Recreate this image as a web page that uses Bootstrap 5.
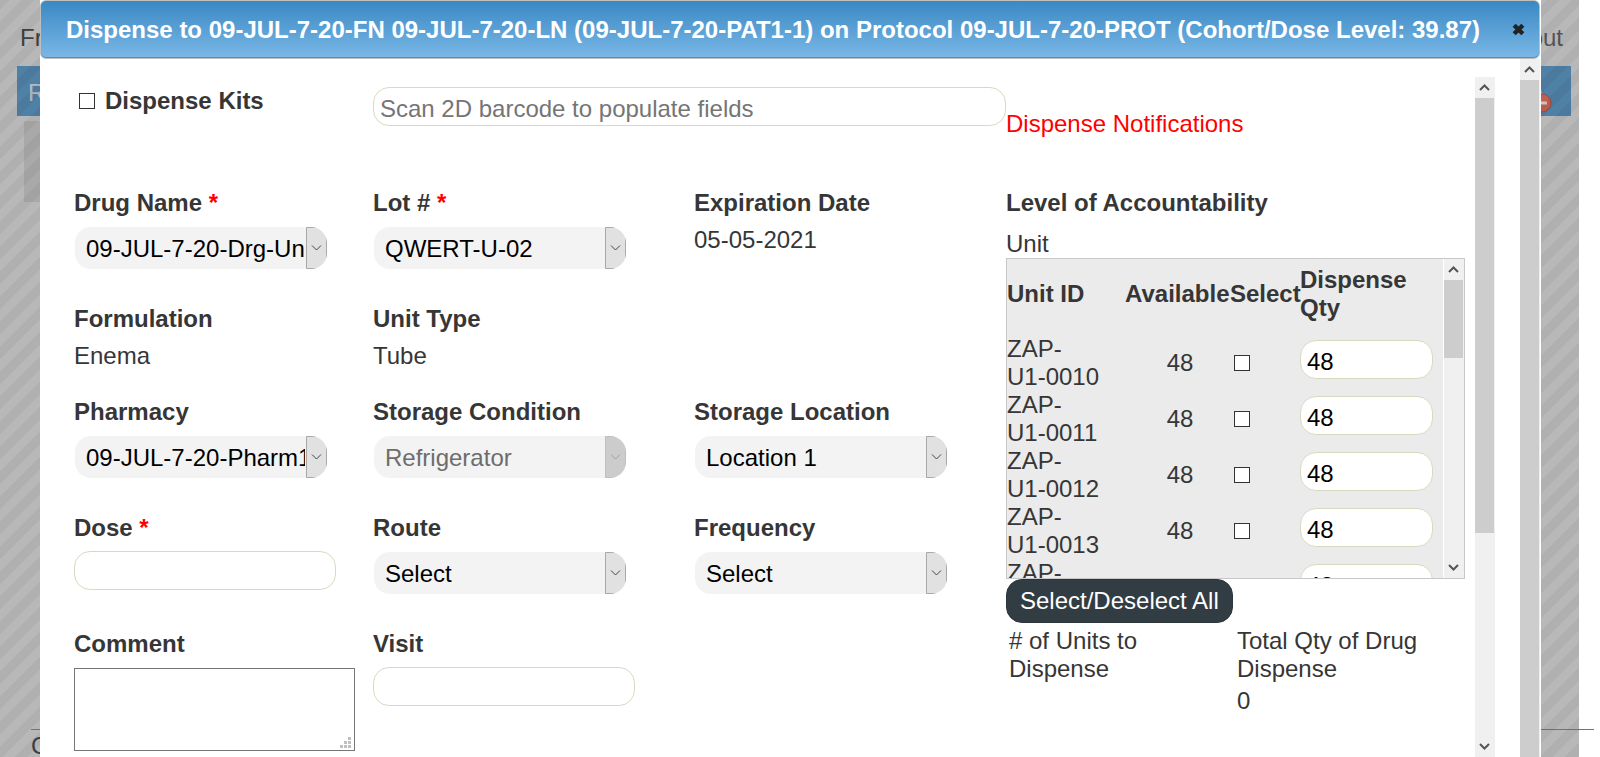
<!DOCTYPE html>
<html lang="en">
<head>
<meta charset="utf-8">
<meta name="viewport" content="width=device-width, initial-scale=1">
<title>Dispense</title>
<link href="https://cdn.jsdelivr.net/npm/bootstrap@5.3.0/dist/css/bootstrap.min.css" rel="stylesheet">
<style>
  body { font: 24px/28px "Liberation Sans", Arial, sans-serif; color: #363636; background: #fff; overflow: hidden; }
  .app-stage { height: 100vh; overflow: hidden; }

  /* page behind the dialog, dimmed by the striped overlay */
  .behind { position: absolute; inset: 0 21px 0 0; background: #b8b8b8; }
  .behind-head { height: 66px; padding: 24px 16px 0 20px; color: #404040; }
  .behind-head a { color: #555; text-decoration: none; }
  .behind-nav { height: 50px; margin: 0 8px 0 17px; padding: 13px 11px; background: #4f80a6; color: #b4bcc2; }
  .behind-nav svg { margin-right: 7px; }
  .behind-tab { width: 120px; height: 81px; margin: 5px 0 0 24px; background: #a9a9a9; }
  .behind-foot { margin: auto -15px 0 31px; border-top: 1px solid #77745f; height: 28px; padding-top: 2px; color: #404040; }
  .stripes { position: absolute; inset: 0 21px 0 0;
    background: linear-gradient(135deg, rgba(0,0,0,.045) 25%, transparent 25% 50%, rgba(0,0,0,.045) 50% 75%, transparent 75%) -3px 0 / 25px 25px; }

  .dispense-dialog { position: absolute; inset: 0 59px 0 40px; background: #fff; border-right: 1px solid #fff; }
  .dispense-title { flex: none; height: 59px; padding: 0 14px 0 25px; border: 1px solid #bfbfbf; border-radius: 6px; background: linear-gradient(#3a88c4, #7ab8e6); box-shadow: inset 0 -1px #4593d4; color: #fff; }
  .dispense-title h1 { font-size: 24px; line-height: 28px; font-weight: bold; margin: 0; white-space: nowrap; }
  .dispense-title button { border: 0; background: none; padding: 0; width: 13px; height: 28px; line-height: 0; }

  /* scroll bars */
  .bar { width: 20px; flex: none; background: #f0f0f0; border-right: 1px solid #f0f0f0; }
  .bar svg { display: block; width: 19px; height: 21px; flex: none; }
  .bar .thumb { background: #cdcdcd; }
  .thumb-form { height: 64%; }
  .thumb-units { height: 78px; }

  .dispense-pane { padding: 18px 25px 0 34px; }
  .form-side { flex: 932 1 0; min-width: 0; }
  .account-side { flex: 469 1 0; min-width: 0; }
  .fields { display: grid; grid-template-columns: 299fr 321fr 312fr; }
  .scan-row { height: 112px; }
  .scan-row .kits { padding: 10px 0 0 5px; gap: 10px; }
  .scan-row .kits .box { margin-top: 6px; }
  .scan-row .scan { grid-column: span 2; padding-top: 10px; }
  .req { color: #f00; }
  .field { padding-bottom: 28px; }
  .field label, .field .name { display: block; font-weight: bold; margin-bottom: 9px; }
  .kits label { font-weight: bold; }

  .pill-input { display: block; border: 1px solid #d8dabf; border-radius: 16px; background: #fff; color: #000; padding: 7px 6px 2px; height: 39px; width: 262px; line-height: 28px; outline: 0; }
  .pill-input::placeholder { color: #757575; opacity: 1; }
  .scan .pill-input { width: 100%; }
  .pill-select { display: block; appearance: none; width: 252px; height: 42px; margin: 10px 0 8px 1px; padding: 1px 22px 0 11px; border: 0; border-radius: 16px; color: #000; line-height: 28px; overflow: hidden;
    background: #f3f3f3 url("data:image/svg+xml,%3Csvg xmlns='http://www.w3.org/2000/svg' width='21' height='42'%3E%3Cpath d='M.5.5h20v41H.5z' fill='%23e1e1e1' stroke='%23a8a8a8'/%3E%3Cpath d='M6 18.500l4.500 4.500 4.500-4.500' fill='none' stroke='%23444'/%3E%3C/svg%3E") right top no-repeat; }
  .pill-select:disabled { color: #6d6d6d; opacity: 1;
    background-image: url("data:image/svg+xml,%3Csvg xmlns='http://www.w3.org/2000/svg' width='21' height='42'%3E%3Cpath d='M.5.5h20v41H.5z' fill='%23ccc' stroke='%23bfbfbf'/%3E%3Cpath d='M6 18.500l4.500 4.500 4.500-4.500' fill='none' stroke='%23a0a0a0'/%3E%3C/svg%3E"); }
  .box { appearance: none; flex: none; width: 16px; height: 16px; margin: 0; border: 1px solid #333; background: #fff; display: block; }
  .comment { position: relative; width: 281px; margin-top: 10px; }
  .comment textarea { display: block; width: 100%; height: 83px; border: 1px solid #767676; resize: none; outline: 0; }
  .comment svg { position: absolute; right: 4px; bottom: 3px; }

  .notice { padding-top: 33px; height: 112px; color: #f00; }
  .unit-name { padding-top: 13px; }
  .unit-list { height: 321px; margin-right: 10px; border: 1px solid #c8c8c8; background: #ebebeb; overflow: hidden; }
  .unit-list .bar { border-left: 1px solid #fff; width: 21px; }
  .unit-table { width: 100%; table-layout: fixed; border-collapse: collapse; }
  .unit-table col:nth-child(1) { width: 118px; }
  .unit-table col:nth-child(2) { width: 105px; }
  .unit-table col:nth-child(3) { width: 70px; }
  .unit-table th { padding: 7px 0 13px; vertical-align: middle; }
  .unit-table td { padding: 0; height: 56px; vertical-align: middle; }
  .unit-table .pill-input { width: 133px; margin-bottom: 7px; }
  .unit-table .box { margin-left: 4px; }
  .unit-table .count { text-align: center; padding-left: 5px; }
  .toggle-all { display: block; height: 44px; padding: 0 13px; border: 1px solid #2b353a; border-radius: 16px; background: #323c43; color: #fff; }
  .totals { display: grid; grid-template-columns: 228px 1fr; margin-right: 10px; padding: 4px 0 0 3px; row-gap: 4px; }
  .totals div:nth-child(2) { padding-right: 30px; }
  .totals div:first-child { padding-right: 60px; }
</style>
</head>
<body>
<div class="app-stage position-relative">
  <div class="behind d-flex flex-column">
    <div class="behind-head d-flex justify-content-between"><span>Fr</span><a href="#">out</a></div>
    <div class="behind-nav d-flex justify-content-between"><span>R</span>
      <svg width="30" height="36" viewBox="0 0 30 36" aria-hidden="true">
        <path d="M5 -2h10l5 24H3z" fill="#7f9db4" stroke="#a5b3bd"/>
        <circle cx="19" cy="24" r="9" fill="#c2604f" stroke="#a3483b"/>
        <path d="M13 24h11" stroke="#d9c9c6" stroke-width="3"/>
      </svg>
    </div>
    <div class="behind-tab"></div>
    <div class="behind-foot">C</div>
  </div>
  <div class="stripes"></div>

  <div class="dispense-dialog d-flex flex-column" role="dialog" aria-labelledby="dlg-title">
    <div class="dispense-title d-flex align-items-center justify-content-between">
      <h1 id="dlg-title">Dispense to 09-JUL-7-20-FN 09-JUL-7-20-LN (09-JUL-7-20-PAT1-1) on Protocol 09-JUL-7-20-PROT (Cohort/Dose Level: 39.87)</h1>
      <button type="button" aria-label="Close"><svg width="13" height="13" viewBox="0 0 12 12"><path d="M2 2l8 8M10 2l-8 8" stroke="#222" stroke-width="4"/></svg></button>
    </div>

    <div class="d-flex flex-grow-1 overflow-hidden">
      <form class="dispense-pane d-flex flex-grow-1 overflow-hidden">
        <div class="form-side">
          <div class="fields scan-row">
            <div class="kits d-flex align-items-start">
              <input class="box" type="checkbox" id="kits"><label for="kits">Dispense Kits</label>
            </div>
            <div class="scan"><input class="pill-input" type="text" aria-label="Barcode" placeholder="Scan 2D barcode to populate fields"></div>
          </div>
          <div class="fields">
            <div class="field"><label for="drug">Drug Name <span class="req">*</span></label>
              <select class="pill-select" id="drug"><option>09-JUL-7-20-Drg-Un</option></select></div>
            <div class="field"><label for="lot">Lot # <span class="req">*</span></label>
              <select class="pill-select" id="lot"><option>QWERT-U-02</option></select></div>
            <div class="field"><span class="name">Expiration Date</span>05-05-2021</div>

            <div class="field"><span class="name">Formulation</span>Enema</div>
            <div class="field"><span class="name">Unit Type</span>Tube</div>
            <div class="field"></div>

            <div class="field"><label for="pharmacy">Pharmacy</label>
              <select class="pill-select" id="pharmacy"><option>09-JUL-7-20-Pharm1</option></select></div>
            <div class="field"><label for="storage">Storage Condition</label>
              <select class="pill-select" id="storage" disabled><option>Refrigerator</option></select></div>
            <div class="field"><label for="location">Storage Location</label>
              <select class="pill-select" id="location"><option>Location 1</option></select></div>

            <div class="field"><label for="dose">Dose <span class="req">*</span></label>
              <input class="pill-input" type="text" id="dose"></div>
            <div class="field"><label for="route">Route</label>
              <select class="pill-select" id="route"><option>Select</option></select></div>
            <div class="field"><label for="freq">Frequency</label>
              <select class="pill-select" id="freq"><option>Select</option></select></div>

            <div class="field"><label for="comment">Comment</label>
              <div class="comment"><textarea id="comment"></textarea>
                <svg width="11" height="11" viewBox="0 0 11 11" fill="#c0c0c0" aria-hidden="true"><path d="M8 0h3v3H8zM4 4h3v3H4zM8 4h3v3H8zM0 8h3v3H0zM4 8h3v3H4zM8 8h3v3H8z"/></svg></div></div>
            <div class="field"><label for="visit">Visit</label>
              <input class="pill-input" type="text" id="visit"></div>
          </div>
        </div>

        <div class="account-side">
          <div class="notice">Dispense Notifications</div>
          <div class="fw-bold">Level of Accountability</div>
          <div class="unit-name">Unit</div>
          <div class="unit-list d-flex">
            <div class="flex-grow-1">
              <table class="unit-table">
                <colgroup><col><col><col><col></colgroup>
                <thead><tr><th>Unit ID</th><th>Available</th><th>Select</th><th>Dispense<br>Qty</th></tr></thead>
                <tbody>
                  <tr><td>ZAP-<br>U1-0010</td><td class="count">48</td><td><input class="box" type="checkbox" aria-label="Select ZAP-U1-0010"></td><td><input class="pill-input" type="text" value="48" aria-label="Quantity ZAP-U1-0010"></td></tr>
                  <tr><td>ZAP-<br>U1-0011</td><td class="count">48</td><td><input class="box" type="checkbox" aria-label="Select ZAP-U1-0011"></td><td><input class="pill-input" type="text" value="48" aria-label="Quantity ZAP-U1-0011"></td></tr>
                  <tr><td>ZAP-<br>U1-0012</td><td class="count">48</td><td><input class="box" type="checkbox" aria-label="Select ZAP-U1-0012"></td><td><input class="pill-input" type="text" value="48" aria-label="Quantity ZAP-U1-0012"></td></tr>
                  <tr><td>ZAP-<br>U1-0013</td><td class="count">48</td><td><input class="box" type="checkbox" aria-label="Select ZAP-U1-0013"></td><td><input class="pill-input" type="text" value="48" aria-label="Quantity ZAP-U1-0013"></td></tr>
                  <tr><td class="align-top">ZAP-</td><td></td><td></td><td><input class="pill-input" type="text" value="48" aria-label="Quantity"></td></tr>
                </tbody>
              </table>
            </div>
            <div class="bar d-flex flex-column" aria-hidden="true">
              <svg viewBox="0 0 19 21"><path d="M5 13l4.500-4.500L14 13" fill="none" stroke="#555" stroke-width="2"/></svg>
              <div class="thumb thumb-units"></div>
              <svg class="mt-auto" viewBox="0 0 19 21"><path d="M5 8l4.500 4.500L14 8" fill="none" stroke="#555" stroke-width="2"/></svg>
            </div>
          </div>
          <button type="button" class="toggle-all">Select/Deselect All</button>
          <div class="totals"><div># of Units to Dispense</div><div>Total Qty of Drug Dispense</div><div></div><div>0</div></div>
        </div>

        <div class="bar d-flex flex-column" aria-hidden="true">
          <svg viewBox="0 0 19 21"><path d="M5 13l4.500-4.500L14 13" fill="none" stroke="#555" stroke-width="2"/></svg>
          <div class="thumb thumb-form"></div>
          <svg class="mt-auto" viewBox="0 0 19 21"><path d="M5 8l4.500 4.500L14 8" fill="none" stroke="#555" stroke-width="2"/></svg>
        </div>
      </form>
      <div class="bar d-flex flex-column" aria-hidden="true">
        <svg viewBox="0 0 19 21"><path d="M5 13l4.500-4.500L14 13" fill="none" stroke="#555" stroke-width="2"/></svg>
        <div class="thumb flex-grow-1"></div>
      </div>
    </div>
  </div>
</div>
<script src="https://cdn.jsdelivr.net/npm/bootstrap@5.3.0/dist/js/bootstrap.bundle.min.js"></script>
</body>
</html>
